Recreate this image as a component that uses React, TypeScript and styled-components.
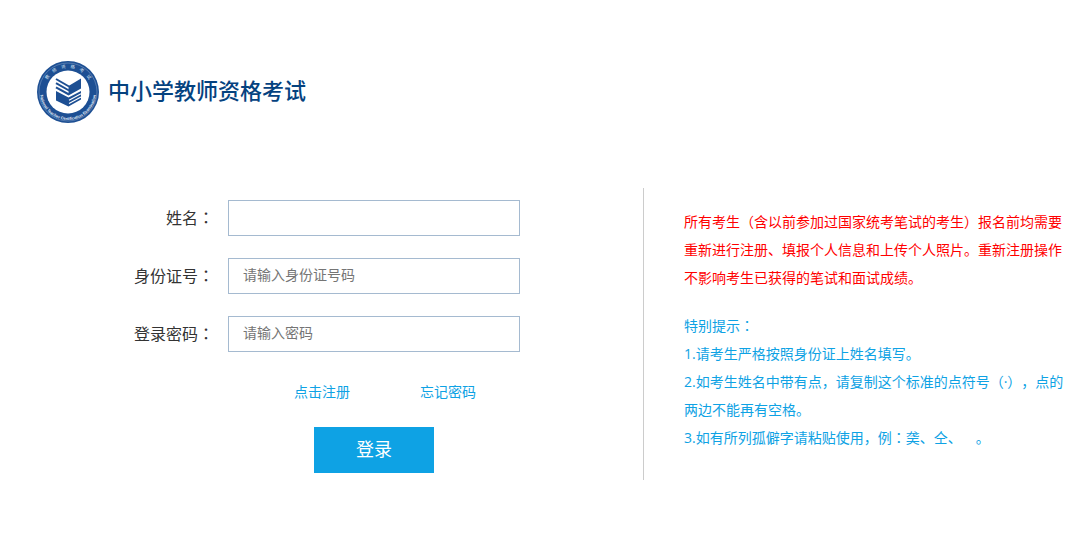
import React from "react";
import styled, { createGlobalStyle } from "styled-components";

const GlobalStyle = createGlobalStyle`
  * { box-sizing: border-box; }
  body {
    margin: 0;
    background: #fff;
    color: #333;
    font-family: "Open Sans", "Noto Sans CJK SC", sans-serif;
    font-size: 14px;
    text-spacing-trim: space-all;
  }
`;

const Page = styled.div`
  padding: 60px 0;
`;

const Header = styled.header`
  display: flex;
  align-items: center;
  gap: 8px;
  padding-left: 36px;
`;

const Emblem = styled.svg`
  display: block;
  width: 64px;
  height: 64px;
  flex: none;
`;

const Title = styled.h1`
  margin: 0;
  padding-bottom: 4px;
  color: #05427f;
  font-size: 22px;
  font-weight: 500;
  line-height: 32px;
`;

const Main = styled.main`
  display: grid;
  grid-template-columns: minmax(0, 644fr) minmax(0, 439fr);
  margin-top: 64px;
`;

const LoginForm = styled.form`
  display: flex;
  flex-direction: column;
  gap: 22px;
  padding: 12px 123px 7px 0;
  border-right: 1px solid #ccc;
`;

const Field = styled.div`
  display: flex;
  align-items: center;
  gap: 14px;
`;

const Label = styled.label`
  flex: 1;
  text-align: right;
  font-size: 16px;
  line-height: 36px;
`;

const TextInput = styled.input`
  width: 292px;
  height: 36px;
  padding: 0 14px 4px;
  border: 1px solid #a5bad0;
  border-radius: 0;
  background: #fff;
  color: #333;
  font: inherit;
  outline: none;

  &::placeholder {
    color: #757575;
    opacity: 1;
  }
`;

const Actions = styled.div`
  align-self: flex-end;
  display: flex;
  flex-direction: column;
  align-items: center;
  gap: 21px;
  width: 292px;
  padding-top: 4px;
`;

const Links = styled.nav`
  display: flex;
  align-self: flex-start;
  gap: 70px;
  padding-left: 66px;
  line-height: 28px;
`;

const TextLink = styled.a`
  color: #0ea2e4;
  text-decoration: none;
`;

const SubmitButton = styled.button`
  width: 120px;
  height: 46px;
  padding: 0 0 4px;
  border: 0;
  background: #0ea2e4;
  color: #fff;
  font-family: inherit;
  font-size: 18px;
  cursor: pointer;
`;

const Notice = styled.aside`
  display: flex;
  flex-direction: column;
  gap: 20px;
  padding: 20px 12px 0 40px;
  line-height: 28px;
`;

const Paragraph = styled.p<{ $tone: "warning" | "info" }>`
  margin: 0;
  color: ${({ $tone }) => ($tone === "warning" ? "#f00" : "#0ea2e4")};
`;

const CenteredMark = styled.span`
  font-family: "Noto Sans CJK JP", sans-serif;
  line-height: 1;
`;

const Colon = () => <CenteredMark lang="ja">：</CenteredMark>;

const Logo = () => (
  <Emblem viewBox="0 0 64 64" role="img" aria-label="中小学教师资格考试">
    <defs>
      <path id="upper-arc" d="M8 32 A24 24 0 0 1 56 32" />
      <path id="lower-arc" d="M4 32 A28 28 0 0 0 60 32" />
    </defs>
    <circle cx="32" cy="32" r="31" fill="#1d4f93" />
    <circle cx="32" cy="32" r="29" fill="none" stroke="#7797c2" strokeWidth="0.6" />
    <circle cx="32" cy="32" r="21.5" fill="#fff" />
    <text fill="#dbe6f4" fontSize="4.5" textAnchor="middle" fontFamily="Noto Sans CJK SC, sans-serif">
      <textPath href="#upper-arc" startOffset="50%">教　师　资　格　考　试</textPath>
    </text>
    <text fill="#e6eef8" fontSize="4" fontWeight="bold" textAnchor="middle" fontFamily="Liberation Sans, sans-serif">
      <textPath href="#lower-arc" startOffset="50%">National Teacher Certification Examination</textPath>
    </text>
    <g fill="#1d4f93">
      <path d="M20 31 L32.5 37.5 L45 31 V39.5 L32.5 46.5 L20 40.5 Z" />
      <path d="M32.5 26 L45 18.5 V28.5 L32.5 35.5 Z" />
    </g>
    <g fill="none" stroke="#1d4f93" strokeWidth="2">
      <path d="M20 19 L33 26.5" />
      <path d="M20 23.2 L33 30.5" />
      <path d="M20 27.4 L33 34.5" />
    </g>
    <g fill="none" stroke="#fff" strokeWidth="1.1">
      <path d="M33 40.3 L45 33.8" />
      <path d="M33 43.6 L45 37" />
    </g>
  </Emblem>
);

export default function App() {
  return (
    <>
      <GlobalStyle />
      <Page lang="zh-CN">
        <Header>
          <Logo />
          <Title>中小学教师资格考试</Title>
        </Header>
        <Main>
          <LoginForm onSubmit={(event) => event.preventDefault()}>
            <Field>
              <Label htmlFor="name">姓名<Colon /></Label>
              <TextInput id="name" type="text" />
            </Field>
            <Field>
              <Label htmlFor="id-number">身份证号<Colon /></Label>
              <TextInput id="id-number" type="text" placeholder="请输入身份证号码" />
            </Field>
            <Field>
              <Label htmlFor="password">登录密码<Colon /></Label>
              <TextInput id="password" type="password" placeholder="请输入密码" />
            </Field>
            <Actions>
              <Links>
                <TextLink href="#register">点击注册</TextLink>
                <TextLink href="#forgot">忘记密码</TextLink>
              </Links>
              <SubmitButton type="submit">登录</SubmitButton>
            </Actions>
          </LoginForm>
          <Notice>
            <Paragraph $tone="warning">
              所有考生（含以前参加过国家统考笔试的考生）报名前均需要重新进行注册、填报个人信息和上传个人照片。重新注册操作不影响考生已获得的笔试和面试成绩。
            </Paragraph>
            <div>
              <Paragraph $tone="info">特别提示<Colon /></Paragraph>
              <Paragraph $tone="info">1.请考生严格按照身份证上姓名填写。</Paragraph>
              <Paragraph $tone="info">
                2.如考生姓名中带有点，请复制这个标准的点符号（·），点的两边不能再有空格。
              </Paragraph>
              <Paragraph $tone="info">
                3.如有所列孤僻字请粘贴使用，例<Colon />䶮、仝、&emsp;。
              </Paragraph>
            </div>
          </Notice>
        </Main>
      </Page>
    </>
  );
}
